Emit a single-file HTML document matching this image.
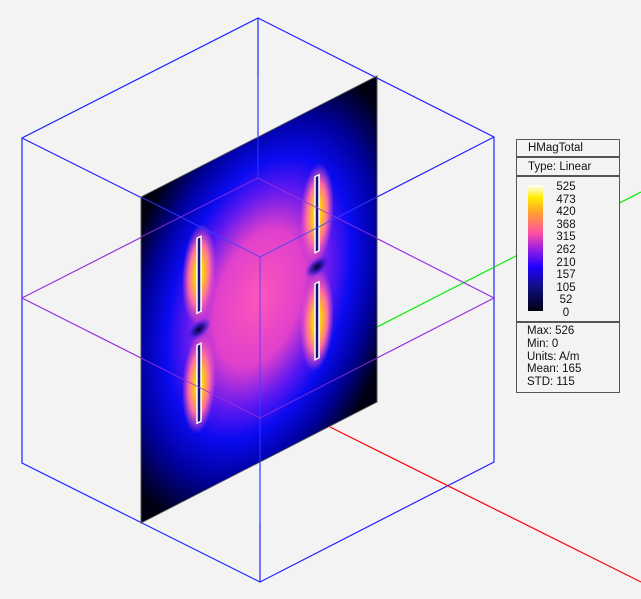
<!DOCTYPE html>
<html><head><style>
html,body{margin:0;background:#f3f3f3;width:641px;height:599px;overflow:hidden;font-family:"Liberation Sans",sans-serif;}
.lg{position:absolute;left:516px;top:139px;width:104px;height:254px;border:1px solid #555;background:#f3f3f3;font-size:11.5px;color:#111;box-sizing:border-box;overflow:hidden}
.row{border-bottom:2px solid #555;padding-left:11px;}
</style></head><body>
<svg width="641" height="599" style="position:absolute;left:0;top:0">
<defs>
<clipPath id="pc"><rect x="0" y="0" width="236" height="326"/></clipPath>
<radialGradient id="glow" cx="0.5" cy="0.5" r="0.5">
<stop offset="0" stop-color="#ff55bb"/><stop offset="0.3" stop-color="#e040cc"/><stop offset="0.48" stop-color="#6018f0"/><stop offset="0.62" stop-color="#0a0af0"/><stop offset="0.8" stop-color="#00009a"/><stop offset="1" stop-color="#000010"/>
</radialGradient>
<radialGradient id="dip" cx="0.5" cy="0.5" r="0.5">
<stop offset="0" stop-color="#ffee00"/><stop offset="0.3" stop-color="#ffc020"/><stop offset="0.6" stop-color="#ff70a0"/><stop offset="1" stop-color="#ff50c0" stop-opacity="0"/>
</radialGradient>
<radialGradient id="dark" cx="0.5" cy="0.5" r="0.5">
<stop offset="0" stop-color="#000020"/><stop offset="0.5" stop-color="#1010a0" stop-opacity="0.7"/><stop offset="1" stop-color="#2020ff" stop-opacity="0"/>
</radialGradient>
</defs>
<g fill="none" stroke="#2222ff" stroke-width="1.2">
<path d="M258 18 L22 138 L22 463 L260 582 L494 462 L494 137 Z M22 138 L260 257 L494 137 M260 257 L260 582 M258 18 L258 342"/>
</g>
<line x1="330" y1="427" x2="641" y2="582" stroke="#ff0000" stroke-width="1.2"/>
<line x1="377" y1="327" x2="641" y2="192" stroke="#00ee00" stroke-width="1.2"/>
<path d="M22 298 L258 178 L494 298 L260 418 Z" fill="none" stroke="#9933dd" stroke-width="1.2"/>
<g transform="matrix(1,-0.5127,0,1,141,197)">
<g clip-path="url(#pc)">
<rect x="0" y="0" width="236" height="326" fill="#000010"/>
<ellipse cx="118" cy="162" rx="150" ry="215" fill="url(#glow)"/>
<ellipse cx="58" cy="107" rx="17" ry="50" fill="url(#dip)"/>
<ellipse cx="58" cy="216" rx="17" ry="50" fill="url(#dip)"/>
<ellipse cx="176" cy="107" rx="17" ry="50" fill="url(#dip)"/>
<ellipse cx="176" cy="214" rx="17" ry="50" fill="url(#dip)"/>
<ellipse cx="58" cy="162" rx="12" ry="9" fill="url(#dark)"/>
<ellipse cx="176" cy="160" rx="12" ry="9" fill="url(#dark)"/>
<g fill="#101080" stroke="#fff" stroke-width="1.5">
<rect x="56" y="70" width="4" height="75"/><rect x="56" y="177" width="4" height="78"/>
<rect x="174" y="69" width="4" height="76"/><rect x="174" y="176" width="4" height="76"/>
</g>
</g>
<rect x="0" y="0" width="236" height="326" fill="none" stroke="#555" stroke-width="1"/>
</g>
<path d="M141 237 L258 178 L377 238 M141 358 L260 418 L377 358" fill="none" stroke="#9933dd" stroke-width="1" opacity="0.8"/>
<path d="M141 197 L260 257 L377 197 M260 257 L260 523 M258 76 L258 178" fill="none" stroke="#3344ff" stroke-width="1" opacity="0.8"/>
</svg>
<div class="lg">
<div class="row" style="height:16px;line-height:16px">HMagTotal</div>
<div class="row" style="height:17px;line-height:18px">Type: Linear</div>
<div class="row" style="height:144px;position:relative">
<div style="position:absolute;left:11px;top:8px;width:15px;height:126px;background:linear-gradient(to top,#000010,#10108a 20%,#2000ff 35%,#a020e0 50%,#ff50a0 62%,#ffa030 78%,#ffee00 90%,#fff)"></div>
<div style="position:absolute;left:36px;top:4px;line-height:12.6px;text-align:center;width:26px">525<br>473<br>420<br>368<br>315<br>262<br>210<br>157<br>105<br>52<br>0</div>
</div>
<div style="padding-left:10px;line-height:12.8px;padding-top:2px">Max: 526<br>Min: 0<br>Units: A/m<br>Mean: 165<br>STD: 115</div>
</div>
</body></html>
